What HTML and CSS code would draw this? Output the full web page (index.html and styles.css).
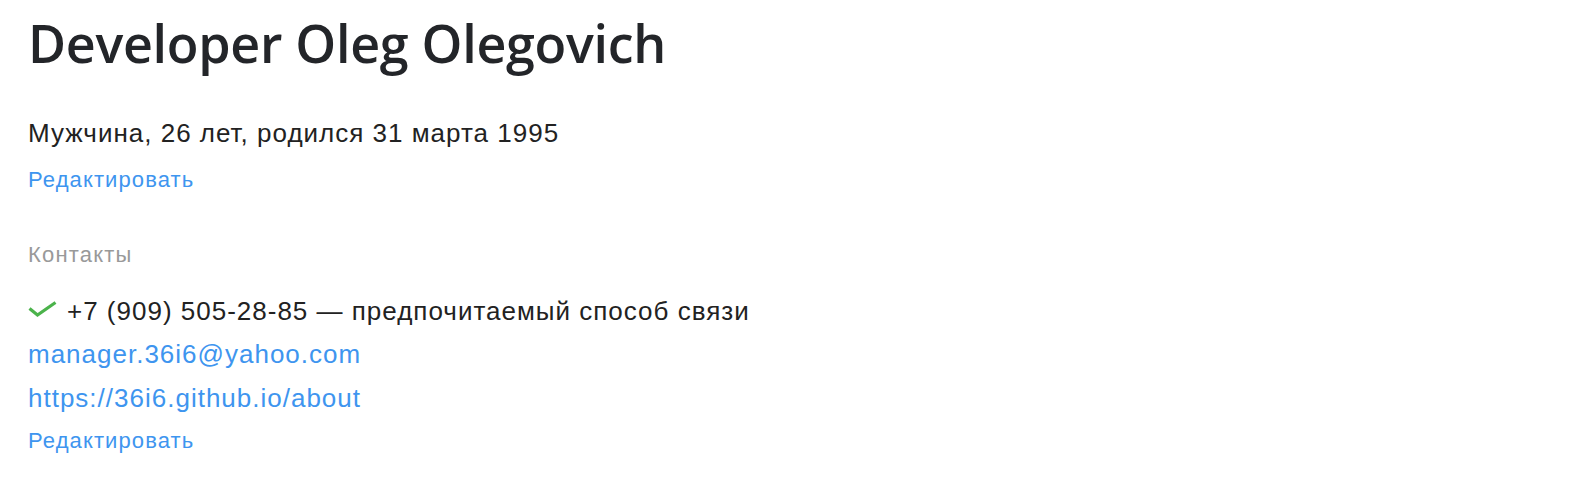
FILE: index.html
```html
<!DOCTYPE html>
<html lang="ru">
<head>
<meta charset="utf-8">
<link rel="stylesheet" href="styles.css">
</head>
<body>
<div class="resume">
  <h1 class="name">Developer Oleg Olegovich</h1>
  <div class="personal">Мужчина, 26 лет, родился 31 марта 1995</div>
  <a class="edit" href="#">Редактировать</a>
  <div class="section-title">Контакты</div>
  <div class="phone">
    <svg class="check" width="29" height="16" viewBox="0 0 29 16"><path d="M1.5 7.5 L9.5 14 L27.5 1.5" fill="none" stroke="#4bb34b" stroke-width="3.2"/></svg>
    <span>+7 (909) 505-28-85 — предпочитаемый способ связи</span>
  </div>
  <a class="contact-link email" href="#">manager.36i6@yahoo.com</a>
  <a class="contact-link url" href="#">https://36i6.github.io/about</a>
  <a class="edit edit-contacts" href="#">Редактировать</a>
</div>
</body>
</html>
```
FILE: styles.css
```css
html, body {
  margin: 0;
  padding: 0;
  background: #fff;
}
.resume {
  padding: 13px 0 0 28px;
  display: flex;
  flex-direction: column;
  align-items: flex-start;
  font-family: "Liberation Sans", Arial, sans-serif;
  color: #222;
}
.name {
  margin: 0;
  font-family: "Open Sans", sans-serif;
  font-weight: 600;
  font-size: 52px;
  line-height: 60px;
  color: #232529;
  letter-spacing: -0.3px;
}
.personal {
  margin-top: 45px;
  font-size: 26px;
  line-height: 30px;
  letter-spacing: 1px;
}
.edit {
  margin-top: 19px;
  font-size: 22px;
  line-height: 26px;
  letter-spacing: 1.1px;
  color: #3e95ef;
  text-decoration: none;
}
.section-title {
  margin-top: 49px;
  font-size: 22px;
  line-height: 26px;
  letter-spacing: 1.2px;
  color: #999;
}
.phone {
  margin-top: 28px;
  display: flex;
  align-items: center;
  gap: 10px;
  font-size: 26px;
  line-height: 30px;
  letter-spacing: 1px;
}
.check {
  display: block;
  margin-top: -5px;
}
.contact-link {
  font-size: 26px;
  line-height: 30px;
  letter-spacing: 1px;
  color: #3e95ef;
  text-decoration: none;
}
.email {
  margin-top: 13px;
}
.url {
  margin-top: 14px;
}
.edit-contacts {
  margin-top: 15px;
}
```
